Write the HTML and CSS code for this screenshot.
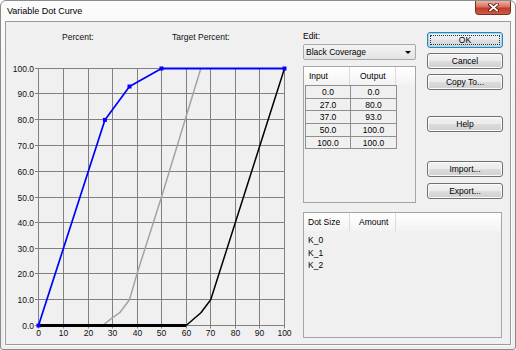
FILE: index.html
```html
<!DOCTYPE html>
<html lang="en">
<head>
  <meta charset="UTF-8" />
  <title>Variable Dot Curve</title>
  <link rel="stylesheet" href="styles.css">
</head>
<body>

<div class="window">
  <!-- Caption -->
  <div class="titlebar">
    <span class="title">Variable Dot Curve</span>
    <span class="close">
      <svg width="11" height="9" viewBox="0 0 11 9">
        <path d="M2 1.5 L9 7.5 M9 1.5 L2 7.5" stroke="#5b1d14" stroke-width="3.6" stroke-linecap="square" />
        <path d="M2 1.5 L9 7.5 M9 1.5 L2 7.5" stroke="#fff" stroke-width="1.8" stroke-linecap="square" />
      </svg>
    </span>
  </div>

  <div class="client">
    <!-- Curve chart, coordinates are page pixels -->
    <svg class="chart" width="290" height="322" viewBox="6 22 290 322">
      <g class="lbl">
        <text x="62" y="40">Percent:</text>
        <text x="172" y="40">Target Percent:</text>
      </g>

      <path class="grid-lines" d="
        M38.5 68.5 V328.5 M63.5 68.5 V328.5 M88.5 68.5 V328.5 M112.5 68.5 V328.5
        M137.5 68.5 V328.5 M161.5 68.5 V328.5 M186.5 68.5 V328.5 M210.5 68.5 V328.5
        M235.5 68.5 V328.5 M259.5 68.5 V328.5 M284.5 68.5 V328.5
        M35 68.5 H284.5 M35 93.5 H284.5 M35 119.5 H284.5 M35 145.5 H284.5
        M35 171.5 H284.5 M35 197.5 H284.5 M35 222.5 H284.5 M35 248.5 H284.5
        M35 273.5 H284.5 M35 299.5 H284.5 M35 325.5 H284.5" />

      <g class="lbl y-lbl">
        <text x="34" y="71.5">100.0</text>
        <text x="34" y="96.5">90.0</text>
        <text x="34" y="122.5">80.0</text>
        <text x="34" y="148.5">70.0</text>
        <text x="34" y="174.5">60.0</text>
        <text x="34" y="200.5">50.0</text>
        <text x="34" y="225.5">40.0</text>
        <text x="34" y="251.5">30.0</text>
        <text x="34" y="276.5">20.0</text>
        <text x="34" y="302.5">10.0</text>
        <text x="34" y="328.5">0.0</text>
      </g>
      <g class="lbl x-lbl">
        <text x="38.5" y="335.5">0</text>
        <text x="63.5" y="335.5">10</text>
        <text x="88.5" y="335.5">20</text>
        <text x="112.5" y="335.5">30</text>
        <text x="137.5" y="335.5">40</text>
        <text x="161.5" y="335.5">50</text>
        <text x="186.5" y="335.5">60</text>
        <text x="210.5" y="335.5">70</text>
        <text x="235.5" y="335.5">80</text>
        <text x="259.5" y="335.5">90</text>
        <text x="284.5" y="335.5">100</text>
      </g>

      <!-- target curve -->
      <path class="curve-gray" d="M102.5 325.5 L112.3 317.8 L119.7 312.7 L129.5 299.8 L136.9 274.1 L161.5 197 L200.8 68.5" />
      <!-- black coverage -->
      <path class="curve-black-base" d="M38.5 325.5 H186.1" />
      <path class="curve-black" d="M186.1 325.5 L200.9 312.7 L210.7 299.8 L284.5 68.5" />
      <!-- edit curve -->
      <path class="curve-blue" d="M38.5 325.5 L104.9 119.9 L129.5 86.5 L161.5 68.5" />
      <path class="curve-blue top" d="M161.5 68.5 L284.5 68.5" />
      <g class="marks">
        <rect x="36.5" y="323.5" width="4" height="4" />
        <rect x="102.9" y="117.9" width="4" height="4" />
        <rect x="127.5" y="84.5" width="4" height="4" />
        <rect x="159.5" y="66.5" width="4" height="4" />
        <rect x="282.5" y="66.5" width="4" height="4" />
      </g>
    </svg>

    <div class="side">
      <div class="side-top">
        <div class="edit-col">
          <div class="label">Edit:</div>
          <div class="combo">
            <span>Black Coverage</span>
            <span class="arrow"></span>
          </div>

          <div class="listview points">
            <div class="lv-head">
              <span class="c1">Input</span>
              <span class="c2">Output</span>
            </div>
            <div class="cells">
              <span>0.0</span><span>0.0</span>
              <span>27.0</span><span>80.0</span>
              <span>37.0</span><span>93.0</span>
              <span>50.0</span><span>100.0</span>
              <span>100.0</span><span>100.0</span>
            </div>
          </div>
        </div>

        <div class="btn-col">
          <button class="btn ok">OK</button>
          <button class="btn">Cancel</button>
          <button class="btn">Copy To...</button>
          <button class="btn help">Help</button>
          <button class="btn import">Import...</button>
          <button class="btn export">Export...</button>
        </div>
      </div>

      <div class="listview dots">
        <div class="lv-head">
          <span class="c1">Dot Size</span>
          <span class="c2">Amount</span>
        </div>
        <div class="rows">
          <div class="row">K_0</div>
          <div class="row">K_1</div>
          <div class="row">K_2</div>
        </div>
      </div>
    </div>
  </div>
</div>

</body>
</html>
```

FILE: styles.css
```css
* {
  box-sizing: border-box;
}

body {
  margin: 0;
  background: #fff;
  font-family: "Liberation Sans", Arial, sans-serif;
  font-size: 8.5px;
  color: #000;
}

/* window frame */
.window {
  width: 516px;
  height: 350px;
  border: 1px solid #8b8b8b;
  border-radius: 6px 6px 3px 3px;
  background: linear-gradient(#fcfcfc, #f2f2f2 30%, #eeeeee);
  display: flex;
  flex-direction: column;
  overflow: hidden;
}

.titlebar {
  height: 20px;
  flex-shrink: 0;
  display: flex;
  justify-content: space-between;
}

.title {
  font-size: 9px;
  line-height: 11px;
  margin: 5px 0 0 6px;
}

.close {
  width: 36px;
  height: 14px;
  margin-right: 4px;
  border: 1px solid #7a3024;
  border-top: none;
  border-radius: 0 0 4px 4px;
  background: linear-gradient(#ebb3a7, #d8715f 45%, #c23b26 55%, #cf5b44);
  display: flex;
  align-items: center;
  justify-content: center;
}

.client {
  flex: 1;
  margin: 0 4px 4px;
  border: 1px solid #9c9c9c;
  box-shadow: 0 0 0 1px #fafafa;
  background: #f0f0f0;
  display: flex;
}

/* chart */
.chart {
  display: block;
  flex-shrink: 0;
}

.lbl text {
  font-family: "Liberation Sans", Arial, sans-serif;
  font-size: 8.5px;
  fill: #111;
}

.y-lbl text {
  text-anchor: end;
}

.x-lbl text {
  text-anchor: middle;
}

.grid-lines {
  fill: none;
  stroke: #808080;
  stroke-width: 1;
}

.curve-gray {
  fill: none;
  stroke: #a3a3a3;
  stroke-width: 1.5;
  stroke-linejoin: round;
}

.curve-black-base {
  fill: none;
  stroke: #000;
  stroke-width: 3;
}

.curve-black {
  fill: none;
  stroke: #000;
  stroke-width: 1.5;
  stroke-linejoin: round;
}

.curve-blue {
  fill: none;
  stroke: #0000ff;
  stroke-width: 1.7;
  stroke-linejoin: round;
}

.curve-blue.top {
  stroke-width: 2;
}

.marks rect {
  fill: #0000ff;
}

/* right side */
.side {
  margin-left: 7px;
  padding-top: 9px;
  display: flex;
  flex-direction: column;
}

.side-top {
  display: flex;
  gap: 11px;
}

.edit-col {
  width: 113px;
}

.label {
  height: 11px;
  line-height: 11px;
}

.combo {
  margin-top: 2px;
  height: 16px;
  border: 1px solid #a9a9a9;
  border-radius: 2px;
  background: linear-gradient(#f4f4f4, #e4e4e4);
  display: flex;
  align-items: center;
  justify-content: space-between;
  padding: 0 4px 0 2px;
}

.arrow {
  border-left: 3px solid transparent;
  border-right: 3px solid transparent;
  border-top: 3px solid #000;
}

.listview {
  border: 1px solid #a5a5a5;
  background: #f0f0f0;
}

.lv-head {
  display: flex;
  height: 18px;
  line-height: 18px;
  background: linear-gradient(#ffffff, #f3f3f3);
}

.lv-head span {
  width: 46px;
  border-right: 1px solid #dcdcdc;
}

.lv-head .c1 {
  padding-left: 5px;
}

.lv-head .c2 {
  padding-left: 10px;
}

.points {
  margin-top: 6px;
  height: 137px;
}

.cells {
  display: grid;
  grid-template-columns: 45px 46px;
  width: max-content;
  margin-left: 1px;
  border-left: 1px solid #8f8f8f;
  border-top: 1px solid #8f8f8f;
}

.cells span {
  height: 12.7px;
  line-height: 12px;
  text-align: center;
  border-right: 1px solid #8f8f8f;
  border-bottom: 1px solid #8f8f8f;
}

.dots {
  margin-top: 9px;
  width: 199px;
  height: 126px;
}

.dots .lv-head .c1 {
  padding-left: 4px;
}

.dots .lv-head .c2 {
  padding-left: 9px;
}

.rows {
  padding-top: 3px;
}

.row {
  height: 12.6px;
  line-height: 12.6px;
  padding-left: 4px;
}

/* buttons */
.btn-col {
  width: 76px;
  display: flex;
  flex-direction: column;
}

.btn {
  height: 16px;
  margin-top: 5px;
  padding: 0;
  border: 1px solid #707070;
  border-radius: 3px;
  background: linear-gradient(#f2f2f2, #ebebeb 50%, #dddddd 50%, #cfcfcf);
  box-shadow: inset 0 0 0 1px #fbfbfb;
  font-family: inherit;
  font-size: 8.5px;
  line-height: 14px;
  color: #000;
}

.btn.ok {
  position: relative;
  margin-top: 1px;
  border-color: #3c7fb1;
  box-shadow: inset 0 0 0 1px #8fdcf5;
  background: linear-gradient(#f0f2f3, #e8eaeb 50%, #dcdfe1 50%, #d2d6d8);
}

.btn.ok::after {
  content: "";
  position: absolute;
  inset: 2px;
  border: 1px dotted #333;
}

.btn.help {
  margin-top: 26px;
}

.btn.import {
  margin-top: 29px;
}

.btn.export {
  margin-top: 6px;
}
```
